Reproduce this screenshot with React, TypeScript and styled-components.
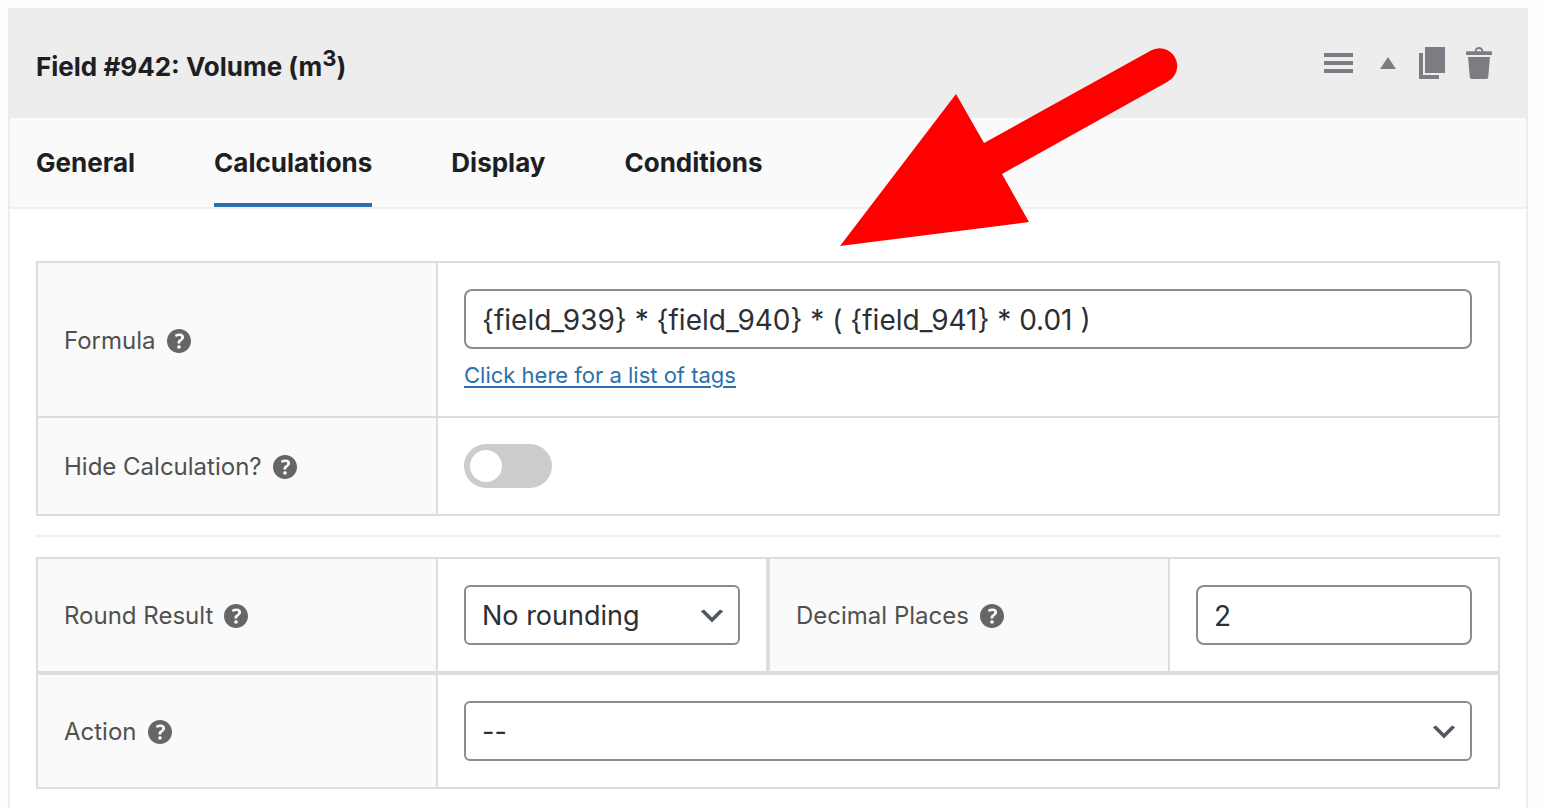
import React, { useState } from "react";
import styled, { createGlobalStyle } from "styled-components";

const color = {
  page: "#fdfdfd",
  header: "#ededed",
  tint: "#fafafa",
  line: "#dddddd",
  soft: "#f0f0f0",
  heading: "#1d2023",
  label: "#50514f",
  control: "#8c8c8c",
  text: "#2c2f33",
  icon: "#7b7d83",
  help: "#666666",
  accent: "#2a71ab",
};

const GlobalStyle = createGlobalStyle`
  *, *::before, *::after { box-sizing: border-box; }
  body {
    margin: 0;
    background: ${color.page};
    color: ${color.text};
    font-family: Inter, "Liberation Sans", sans-serif;
  }
  button, input, select { font: inherit; color: inherit; margin: 0; }
`;

const Page = styled.main`
  position: relative;
  display: flex;
  flex-direction: column;
  min-height: 100vh;
  padding: 8px 16px 0 8px;
`;

const Panel = styled.section`
  flex: 1;
  border: 2px solid ${color.header};
  border-bottom: 0;
  background: #fff;
`;

const Header = styled.header`
  display: flex;
  align-items: flex-start;
  justify-content: space-between;
  height: 108px;
  padding: 37px 31px 0 26px;
  background: ${color.header};
`;

const Title = styled.h2`
  margin: 0;
  padding-top: 4px;
  font-size: 26px;
  font-weight: 700;
  font-optical-sizing: none;
  line-height: 32px;
  color: ${color.heading};

  sup {
    font-size: 22px;
    line-height: 0;
  }
`;

const Actions = styled.div`
  display: flex;
  gap: 15px;
`;

const IconButton = styled.button`
  display: flex;
  padding: 0;
  border: 0;
  background: none;
  color: ${color.icon};
  cursor: pointer;

  svg {
    width: 32px;
    height: 32px;
    fill: currentColor;
  }
`;

const Tabs = styled.div`
  display: flex;
  gap: 79px;
  padding: 0 26px;
  border-bottom: 2px solid ${color.soft};
  background: ${color.tint};
`;

const Tab = styled.button<{ $active: boolean }>`
  height: 89px;
  padding: 4px 0 0;
  border: 0;
  border-bottom: 4px solid ${(p) => (p.$active ? color.accent : "transparent")};
  background: none;
  color: ${color.heading};
  font-size: 26px;
  font-weight: 700;
  font-optical-sizing: none;
  line-height: 32px;
  cursor: pointer;
`;

const Body = styled.div`
  padding: 52px 26px 16px;
`;

const Group = styled.div`
  border: 2px solid ${color.line};
`;

const Divider = styled.hr`
  height: 2px;
  margin: 19px 0 20px;
  border: 0;
  background: ${color.soft};
`;

const Row = styled.div<{ $rule?: number }>`
  display: flex;
  border-top: ${(p) => p.$rule ?? 0}px solid ${color.line};
`;

const Setting = styled.div`
  display: flex;
  flex: 1;
  min-width: 0;

  & + & {
    border-left: 4px solid ${color.line};
  }
`;

const LabelCell = styled.div`
  display: flex;
  flex: 0 0 400px;
  align-items: center;
  gap: 11px;
  padding: 2px 26px 0;
  border-right: 2px solid ${color.line};
  background: ${color.tint};
  color: ${color.label};
  font-size: 24px;
  line-height: 32px;
`;

const FieldCell = styled.div`
  flex: 1;
  min-width: 0;
  padding: 26px;
`;

const HelpButton = styled.button`
  display: flex;
  padding: 0;
  border: 0;
  background: none;
  color: ${color.help};
  cursor: help;

  svg {
    width: 24px;
    height: 24px;
    fill: currentColor;
  }
`;

const TextInput = styled.input`
  display: block;
  width: 100%;
  height: 60px;
  padding: 2px 16px 0;
  border: 2px solid ${color.control};
  border-radius: 8px;
  background: #fff;
  font-size: 28px;
`;

const SelectBox = styled.div`
  position: relative;

  svg {
    position: absolute;
    top: 15px;
    right: 12px;
    width: 32px;
    height: 32px;
    fill: #50575e;
    pointer-events: none;
  }
`;

const Select = styled.select`
  display: block;
  width: 100%;
  height: 60px;
  padding: 0 48px 0 16px;
  border: 2px solid ${color.control};
  border-radius: 6px;
  background: #fff;
  font-size: 27px;
  appearance: none;
`;

const TagsLink = styled.a`
  display: table;
  margin-top: 12px;
  color: ${color.accent};
  font-size: 22px;
  line-height: 29px;
  text-decoration-thickness: 2px;
  text-underline-offset: 3px;
`;

const Toggle = styled.input`
  display: flex;
  align-items: center;
  width: 88px;
  height: 44px;
  margin: 0;
  padding: 6px;
  border-radius: 22px;
  background: #cccccc;
  appearance: none;
  cursor: pointer;

  &::before {
    content: "";
    width: 32px;
    height: 32px;
    border-radius: 50%;
    background: #fff;
  }

  &:checked {
    justify-content: flex-end;
    background: ${color.accent};
  }
`;

const Arrow = styled.svg`
  position: absolute;
  top: 46px;
  left: 838px;
  width: 342px;
  height: 202px;
  fill: #ff0000;
  pointer-events: none;
`;

const Help = ({ about }: { about: string }) => (
  <HelpButton type="button" aria-label={`Help: ${about}`}>
    <svg viewBox="3 3 14 14" aria-hidden="true">
      <path d="M17 10c0-3.87-3.14-7-7-7-3.87 0-7 3.13-7 7s3.13 7 7 7c3.86 0 7-3.13 7-7zm-6.3 1.48H9.14v-.43c0-.38.08-.7.24-.98s.46-.57.88-.89c.41-.29.68-.53.81-.71.14-.18.2-.39.2-.62 0-.25-.09-.44-.28-.58-.19-.13-.45-.19-.79-.19-.58 0-1.25.19-2 .57l-.64-1.28c.87-.49 1.8-.74 2.77-.74.81 0 1.45.2 1.92.58.48.39.71.91.71 1.55 0 .43-.09.8-.29 1.11-.19.32-.57.67-1.11 1.06-.38.28-.61.49-.71.63-.1.15-.15.34-.15.57v.35zm-1.47 2.74c-.18-.17-.27-.42-.27-.73 0-.33.08-.58.26-.75s.43-.25.77-.25c.32 0 .57.09.75.26s.27.42.27.74c0 .3-.09.55-.27.72-.18.18-.43.27-.75.27-.33 0-.58-.09-.76-.26z" />
    </svg>
  </HelpButton>
);

const Field = ({
  id,
  label,
  children,
}: {
  id: string;
  label: string;
  children: React.ReactNode;
}) => (
  <Setting>
    <LabelCell>
      <label htmlFor={id}>{label}</label>
      <Help about={label} />
    </LabelCell>
    <FieldCell>{children}</FieldCell>
  </Setting>
);

const Dropdown = ({ id, options }: { id: string; options: string[] }) => (
  <SelectBox>
    <Select id={id}>
      {options.map((option) => (
        <option key={option}>{option}</option>
      ))}
    </Select>
    <svg viewBox="0 0 20 20" aria-hidden="true">
      <path d="M5 6l5 5 5-5 2 1-7 7-7-7 2-1z" />
    </svg>
  </SelectBox>
);

const tabs = ["General", "Calculations", "Display", "Conditions"];

export default function App() {
  const [active, setActive] = useState("Calculations");

  return (
    <Page>
      <GlobalStyle />
      <Panel>
        <Header>
          <Title>
            Field #942: Volume (m<sup>3</sup>)
          </Title>
          <Actions>
            <IconButton type="button" aria-label="Reorder field">
              <svg viewBox="0 0 32 32">
                <path d="M2 6h29v4H2zM2 14h29v4H2zM2 22h29v4H2z" />
              </svg>
            </IconButton>
            <IconButton type="button" aria-label="Collapse field">
              <svg viewBox="0 0 32 32">
                <path d="M11 22L19 10l8 12z" />
              </svg>
            </IconButton>
            <IconButton type="button" aria-label="Duplicate field">
              <svg viewBox="0 0 32 32">
                <path d="M9 0h20v26H9zM3 6h4v22h16v4H3z" />
              </svg>
            </IconButton>
            <IconButton type="button" aria-label="Delete field">
              <svg viewBox="0 0 32 32">
                <path
                  fillRule="evenodd"
                  d="M11.500 4.200C12 1.600 13.700 0 16 0s4 1.600 4.500 4.200H27.500c.9 0 1.500.5 1.500 1.300V8H3V5.500c0-.8.6-1.300 1.500-1.300zM13.500 4.200h5C18.200 2.700 17.300 1.900 16 1.900s-2.200.8-2.500 2.300zM5 10h22l-1.800 20.300c-.1 1-.8 1.700-1.800 1.700H8.600c-1 0-1.700-.7-1.800-1.700z"
                />
              </svg>
            </IconButton>
          </Actions>
        </Header>

        <Tabs role="tablist">
          {tabs.map((tab) => (
            <Tab
              key={tab}
              type="button"
              role="tab"
              aria-selected={tab === active}
              $active={tab === active}
              onClick={() => setActive(tab)}
            >
              {tab}
            </Tab>
          ))}
        </Tabs>

        <Body>
          <Group>
            <Row>
              <Field id="formula" label="Formula">
                <TextInput
                  id="formula"
                  type="text"
                  defaultValue="{field_939} * {field_940} * ( {field_941} * 0.01 )"
                />
                <TagsLink href="#tags">Click here for a list of tags</TagsLink>
              </Field>
            </Row>
            <Row $rule={2}>
              <Field id="hide" label="Hide Calculation?">
                <Toggle id="hide" type="checkbox" role="switch" />
              </Field>
            </Row>
          </Group>

          <Divider />

          <Group>
            <Row>
              <Field id="rounding" label="Round Result">
                <Dropdown
                  id="rounding"
                  options={["No rounding", "Round up", "Round down"]}
                />
              </Field>
              <Field id="decimals" label="Decimal Places">
                <TextInput id="decimals" type="text" inputMode="numeric" defaultValue="2" />
              </Field>
            </Row>
            <Row $rule={4}>
              <Field id="action" label="Action">
                <Dropdown id="action" options={["--"]} />
              </Field>
            </Row>
          </Group>
        </Body>
      </Panel>

      <Arrow viewBox="838 46 342 202" aria-hidden="true">
        <path d="M840 246L956 94l28 49 167-92.500a17.500 17.500 0 0 1 17 31L1002 174l27 48z" />
      </Arrow>
    </Page>
  );
}
